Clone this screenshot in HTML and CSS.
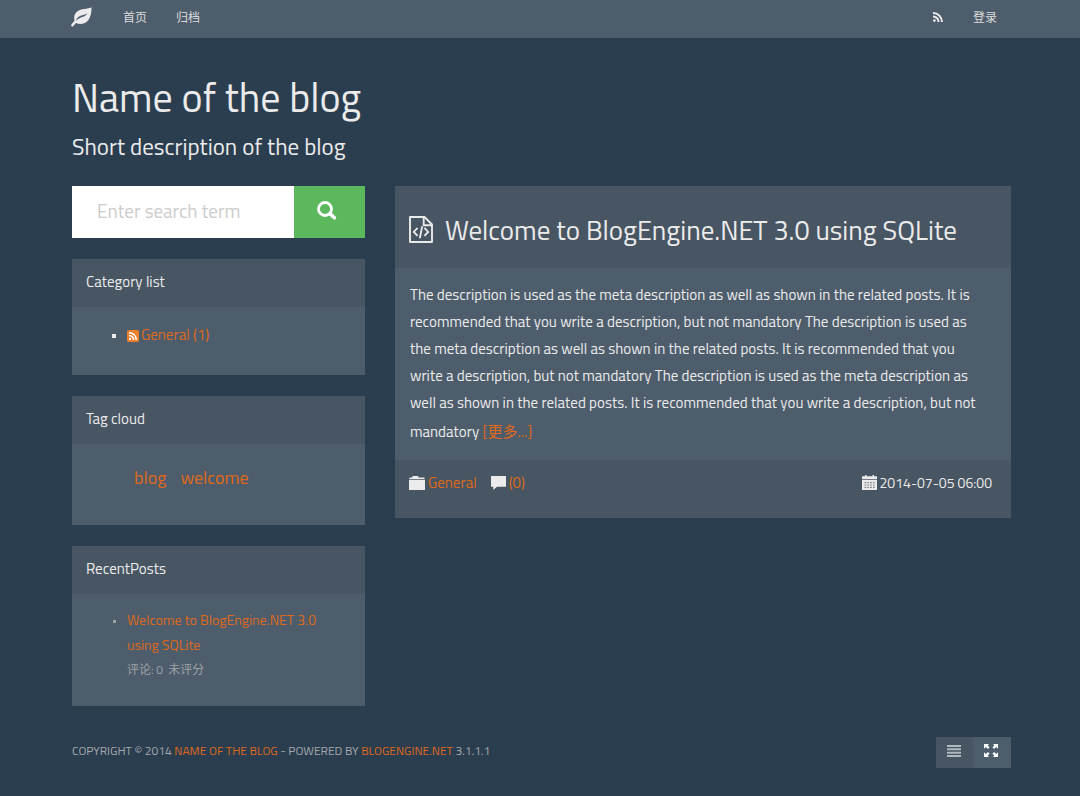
FILE: index.html
```html
<!DOCTYPE html>
<html lang="zh-CN">
<head>
<meta charset="utf-8">
<meta name="viewport" content="width=device-width, initial-scale=1">
<title>Name of the blog</title>
<link rel="stylesheet" href="styles.css">
</head>
<body>
<nav class="navbar">
  <div class="container navbar-inner">
    <a class="brand" href="#" aria-label="Home">
      <svg width="21" height="20" viewBox="0 0 21 20"><path fill="#ebebeb" d="M20.500.300C16.500 2.300 10 1.600 6.300 4.400 3.300 6.600 2.600 10.200 3.600 13.400 2.600 15 .800 16.500.200 17.800c-.4 1.300 1.300 2.400 2.200 1.200.9-1.100 1.500-2 2.600-2.900 4 1.900 9.600 1 12.400-3C20.100 9.200 20.600 4.500 20.500.300zM16.200 6.300c-1.600 3.600-4.600 3.500-7.200 4.600-1.600.7-2.800 1.700-4 2.900.6-2.600 2.400-4 4.600-5 2.300-1 4.600-.9 6.600-2.500z"/></svg>
    </a>
    <a class="nav-link" href="#">首页</a>
    <a class="nav-link" href="#">归档</a>
    <a class="nav-link nav-feed" href="#" aria-label="RSS">
      <svg width="10" height="10" viewBox="0 0 10 10"><g fill="none" stroke="#ebebeb" stroke-width="2"><path d="M0 1.100A8.700 8.700 0 0 1 8.900 10"/><path d="M0 4.400A5.600 5.600 0 0 1 5.600 10"/></g><circle cx="1.400" cy="8.600" r="1.400" fill="#ebebeb"/></svg>
    </a>
    <a class="nav-link" href="#">登录</a>
  </div>
</nav>

<header class="container masthead">
  <h1 class="site-title">Name of the blog</h1>
  <p class="site-tagline">Short description of the blog</p>
</header>

<div class="container columns">
  <aside class="sidebar">
    <form class="search">
      <input class="search-input" type="text" placeholder="Enter search term" aria-label="Search">
      <button class="search-button" type="button" aria-label="Search">
        <svg width="20" height="20" viewBox="0 0 20 20" fill="none" stroke="#fff"><circle cx="8" cy="8" r="6.500" stroke-width="2.800"/><path stroke-width="3.600" stroke-linecap="round" d="M13.400 13.100l4 3.700"/></svg>
      </button>
    </form>

    <section class="panel">
      <h2 class="panel-title">Category list</h2>
      <ul class="list">
        <li><div><svg class="feed-badge" width="12" height="12" viewBox="0 0 12 12"><rect width="12" height="12" rx="2" fill="#ee7f2d"/><g fill="none" stroke="#fff" stroke-width="1.500"><path d="M2 2.700A7.300 7.300 0 0 1 9.300 10"/><path d="M2 5.400A4.600 4.600 0 0 1 6.600 10"/></g><circle cx="3.100" cy="8.900" r="1.100" fill="#fff"/></svg><a href="#">General (1)</a></div></li>
      </ul>
    </section>

    <section class="panel">
      <h2 class="panel-title">Tag cloud</h2>
      <div class="tags">
        <a href="#">blog</a>
        <a href="#">welcome</a>
      </div>
    </section>

    <section class="panel">
      <h2 class="panel-title">RecentPosts</h2>
      <ul class="list recent">
        <li><div><a href="#">Welcome to BlogEngine.NET 3.0 using SQLite</a><span class="recent-meta">评论: 0&nbsp; 未评分</span></div></li>
      </ul>
    </section>
  </aside>

  <main class="content">
    <article class="post">
      <h2 class="post-title">
        <svg width="24" height="27" viewBox="0 0 24 27" fill="none" stroke="#ebebeb" stroke-width="1.900"><path stroke-linejoin="round" d="M1 1h14.500L23 8.500V26H1z"/><path d="M14.700 1v8.200H23"/><path stroke-width="1.800" d="M8.600 11.900L4.800 15.900l3.800 4M15.400 11.900l3.800 4-3.800 4M13.200 10.300l-2.400 11.900"/></svg>
        <span>Welcome to BlogEngine.NET 3.0 using SQLite</span>
      </h2>
      <p class="post-body">The description is used as the meta description as well as shown in the related posts. It is recommended that you write a description, but not mandatory The description is used as the meta description as well as shown in the related posts. It is recommended that you write a description, but not mandatory The description is used as the meta description as well as shown in the related posts. It is recommended that you write a description, but not mandatory <a class="more" href="#">[更多...]</a></p>
      <footer class="post-footer">
        <span class="meta">
          <svg width="16" height="14" viewBox="0 0 16 14" fill="#ebebeb"><path d="M0 3.800h16V14H0zM.500 2.900V1.500h2.800V.700L4 0h4.800l.7.700v.8h6v1.400z"/></svg>
          <a href="#">General</a>
        </span>
        <span class="meta">
          <svg width="15" height="14" viewBox="0 0 15 14" fill="#ebebeb"><path d="M.300 0h14.400l.3.300v10.200l-.3.300H6L2.300 14v-3.200H.300L0 10.500V.300z"/></svg>
          <a href="#">(0)</a>
        </span>
        <span class="meta meta-date">
          <svg width="15" height="15" viewBox="0 0 15 15"><path fill="#ebebeb" d="M0 1.200h3V0h1.500v1.200h6V0H12v1.200h3v3H0zM0 5h15v10H0z"/><g fill="#7f8890"><path d="M2.500 7h1.800v1.200H2.500zM5.300 7h1.800v1.200H5.300zM8.100 7h1.800v1.200H8.100zM10.900 7h1.800v1.200h-1.800zM2.500 9.400h1.800v1.200H2.500zM5.300 9.400h1.800v1.200H5.300zM8.100 9.400h1.800v1.200H8.100zM10.900 9.400h1.800v1.200h-1.800zM2.500 11.800h1.800V13H2.500zM5.300 11.800h1.800V13H5.300zM8.100 11.800h1.800V13H8.100zM10.900 11.800h1.800V13h-1.800z"/></g></svg>
          <time>2014-07-05 06:00</time>
        </span>
      </footer>
    </article>
  </main>
</div>

<footer class="container site-footer">
  <p class="copyright">Copyright © 2014 <a href="#">Name of the blog</a> - Powered by <a href="#">BlogEngine.NET</a> 3.1.1.1</p>
  <div class="view-switch">
    <button class="view-button" type="button" aria-label="Boxed"><svg width="14" height="12" viewBox="0 0 14 12" fill="#b0b8bf"><path d="M0 0h14v2H0zM0 3.300h14v2H0zM0 6.700h14v2H0zM0 10h14v2H0z"/></svg></button>
    <button class="view-button view-wide" type="button" aria-label="Wide"><svg width="14" height="13" viewBox="0 0 14 13" fill="#fff"><path d="M0 0h5L3.600 1.400l2 1.900L3.900 5l-2-2L0 4.800zM14 0H9l1.400 1.400-2 1.900L10.100 5l2-2L14 4.800zM0 13h5l-1.400-1.400 2-1.900L3.900 8l-2 2L0 8.200zM14 13H9l1.400-1.400-2-1.900L10.100 8l2 2L14 8.200z"/></svg></button>
  </div>
</footer>
</body>
</html>
```

FILE: styles.css
```css
* {
  box-sizing: border-box;
}

body {
  margin: 0;
  background: #2b3e50;
  color: #ebebeb;
  font: 15px/27px "Titillium Web", Roboto, "Noto Sans CJK SC", sans-serif;
}

a {
  color: #df691a;
  text-decoration: none;
}

h1, h2, p, ul {
  margin: 0;
  padding: 0;
  font-weight: 400;
}

svg {
  flex: none;
}

button {
  display: flex;
  align-items: center;
  justify-content: center;
  border: 0;
  padding: 0;
  cursor: pointer;
}

.container {
  max-width: 942px;
  margin: 0 auto;
  padding-left: 3px;
}

.navbar {
  background: #4e5d6c;
}

.navbar-inner {
  display: flex;
  align-items: center;
  height: 38px;
  padding-bottom: 4px;
}

.brand {
  display: flex;
  margin: 0 16px 0 -1px;
}

.nav-link {
  padding: 0 14px 0 15px;
  color: #dcdcdc;
  font-size: 12px;
}

.nav-feed {
  display: flex;
  margin-left: auto;
  padding-right: 15px;
}

.masthead {
  padding-top: 37px;
}

.site-title {
  font-size: 40px;
  line-height: 46px;
}

.site-tagline {
  margin-top: 12px;
  font-size: 23px;
  line-height: 28px;
}

.columns {
  display: grid;
  grid-template-columns: 293px minmax(0, 1fr);
  gap: 30px;
  align-items: start;
  padding-top: 25px;
}

.sidebar {
  display: grid;
  grid-template-columns: minmax(0, 1fr);
  gap: 21px;
}

.search {
  display: flex;
  height: 52px;
}

.search-input {
  flex: 1;
  min-width: 0;
  border: 0;
  padding: 0 25px 4px;
  background: #fff;
  font: inherit;
  font-size: 19px;
}

.search-input::placeholder {
  color: #ccc;
}

.search-button {
  width: 71px;
  padding: 0 5px 3px 0;
  background: #5cb85c;
}

.panel {
  background: #4e5d6c;
}

.panel-title {
  height: 48px;
  padding: 9px 14px;
  background: #485563;
  font-size: 15px;
}

.list {
  padding: 14px 40px 27px;
  list-style: none;
}

.list li {
  display: flex;
  gap: 11px;
}

.list li::before {
  flex: none;
  width: 4px;
  height: 4px;
  margin-top: 13px;
  background: currentColor;
  content: "";
}

.feed-badge {
  margin-right: 2px;
  vertical-align: -2px;
}

.tags {
  display: flex;
  gap: 14px;
  padding: 20px 62px 34px;
  font-size: 18px;
}

.recent {
  padding-top: 13px;
  padding-bottom: 24px;
  color: #9fa2a5;
  font-size: 14px;
  line-height: 25px;
}

.recent li::before {
  width: 3px;
  height: 3px;
  margin-left: 1px;
}

.recent-meta {
  display: block;
  font-size: 12px;
}

.post {
  background: #4e5d6c;
}

.post-title {
  display: flex;
  align-items: center;
  gap: 12px;
  padding: 30px 14px 25px;
  background: #485563;
  font-size: 27px;
  line-height: 26px;
}

.post-body {
  padding: 13px 30px 13px 15px;
}

.more {
  line-height: 31px;
}

.post-footer {
  display: flex;
  gap: 14px;
  padding: 9px 19px 22px 14px;
  background: #485563;
}

.meta {
  display: flex;
  align-items: center;
  gap: 3px;
}

.meta-date {
  margin-left: auto;
  font-size: 14px;
}

.site-footer {
  display: flex;
  align-items: center;
  justify-content: space-between;
  padding-top: 31px;
  padding-bottom: 28px;
}

.copyright {
  padding-bottom: 4px;
  color: #a5a8aa;
  font-size: 12px;
  text-transform: uppercase;
}

.view-switch {
  display: flex;
}

.view-button {
  width: 37px;
  height: 31px;
  padding: 0 2px 4px 0;
  background: #485563;
}

.view-wide {
  width: 38px;
  background: #4e5d6c;
}
```
